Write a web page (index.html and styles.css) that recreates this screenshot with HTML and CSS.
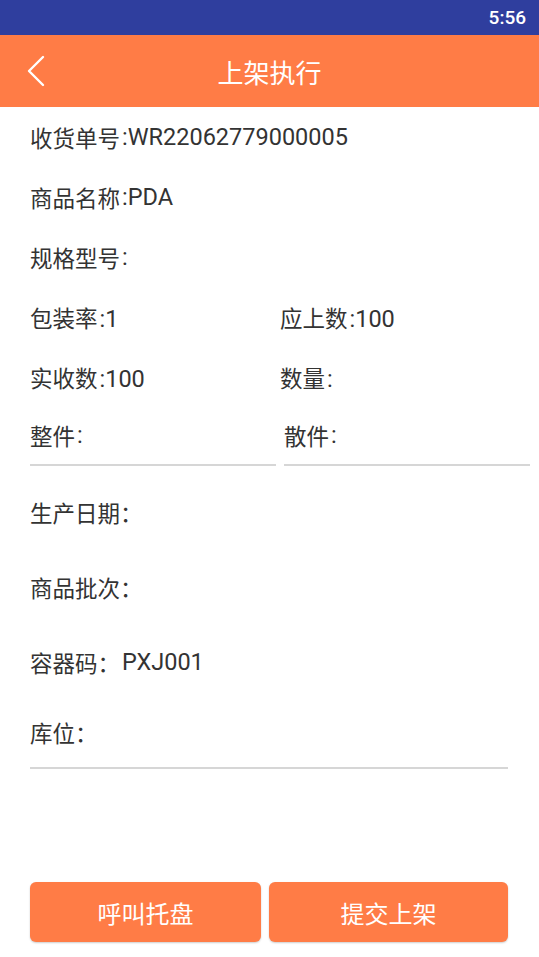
FILE: index.html
```html
<!DOCTYPE html>
<html lang="zh-CN">
<head>
  <meta charset="UTF-8">
  <title>上架执行</title>
  <link rel="stylesheet" href="styles.css">
</head>
<body>
  <div class="page">
    <div class="status-bar">
      <span class="time">5:56</span>
    </div>

    <div class="toolbar">
      <span class="back">
        <svg width="20" height="32" viewBox="0 0 20 32">
          <polyline points="17,2 3,16 17,30" fill="none" stroke="#fff" stroke-width="2.4" stroke-linecap="round" stroke-linejoin="round"/>
        </svg>
      </span>
      <h1>上架执行</h1>
    </div>

    <div class="info">
      <div class="row"><span class="zh">收货单号</span>:WR22062779000005</div>
      <div class="row"><span class="zh">商品名称</span>:PDA</div>
      <div class="row"><span class="zh">规格型号</span>:</div>
      <div class="row two">
        <span><span class="zh">包装率</span>:1</span>
        <span><span class="zh">应上数</span>:100</span>
      </div>
      <div class="row two">
        <span><span class="zh">实收数</span>:100</span>
        <span><span class="zh">数量</span>:</span>
      </div>
      <div class="inputs">
        <label class="field"><span class="zh">整件</span>:</label>
        <label class="field"><span class="zh">散件</span>:</label>
      </div>
    </div>

    <div class="extra">
      <div class="row tall"><span class="zh">生产日期：</span></div>
      <div class="row tall"><span class="zh">商品批次：</span></div>
      <div class="row tall"><span class="zh">容器码：</span>PXJ001</div>
      <label class="field wide"><span class="zh">库位：</span></label>
    </div>

    <div class="actions">
      <button>呼叫托盘</button>
      <button>提交上架</button>
    </div>
  </div>
</body>
</html>
```

FILE: styles.css
```css
body {
  margin: 0;
  font-family: Roboto, "Noto Sans CJK SC", sans-serif;
  color: #333;
  background: #fff;
}
.page {
  width: 539px;
  min-height: 957px;
  display: flex;
  flex-direction: column;
}
.status-bar {
  height: 35px;
  background: #2f3e9e;
  display: flex;
  align-items: center;
  justify-content: flex-end;
  padding-right: 13px;
}
.time {
  color: #fff;
  font-size: 19px;
  font-weight: 500;
}
.toolbar {
  height: 72px;
  background: #ff7c46;
  display: flex;
  align-items: center;
  justify-content: center;
  position: relative;
}
.toolbar h1 {
  margin: 0;
  color: #fff;
  font-size: 26px;
  font-weight: normal;
  font-family: "Noto Sans CJK SC", sans-serif;
}
.back {
  position: absolute;
  left: 26px;
  top: 20px;
  display: flex;
}
.zh {
  font-family: "Noto Sans CJK SC", sans-serif;
  font-size: 22.5px;
  margin-right: 2px;
}
.info {
  padding: 0 9px 0 30px;
}
.row {
  height: 60px;
  display: flex;
  align-items: center;
  font-size: 23.5px;
}
.two span {
  width: 254px;
}
.two .zh {
  width: auto;
}
.inputs {
  display: flex;
  gap: 8px;
  height: 59px;
}
.field {
  flex: 1;
  display: flex;
  align-items: center;
  padding-bottom: 2px;
  font-size: 23.5px;
  border-bottom: 2px solid #d6d6d6;
}
.extra {
  padding: 8px 31px 0 30px;
}
.row.tall {
  height: 75px;
}
.field.wide {
  height: 66px;
}
.actions {
  margin-top: auto;
  display: flex;
  gap: 8px;
  padding: 0 31px 15px 30px;
}
button {
  height: 60px;
  flex: 1;
  border: none;
  border-radius: 6px;
  background: #ff7c46;
  color: #fff;
  font-size: 24px;
  font-family: "Noto Sans CJK SC", sans-serif;
  box-shadow: 0 1px 2px rgba(0, 0, 0, 0.2);
}
button:first-child {
  flex: 0 0 231px;
}
```
